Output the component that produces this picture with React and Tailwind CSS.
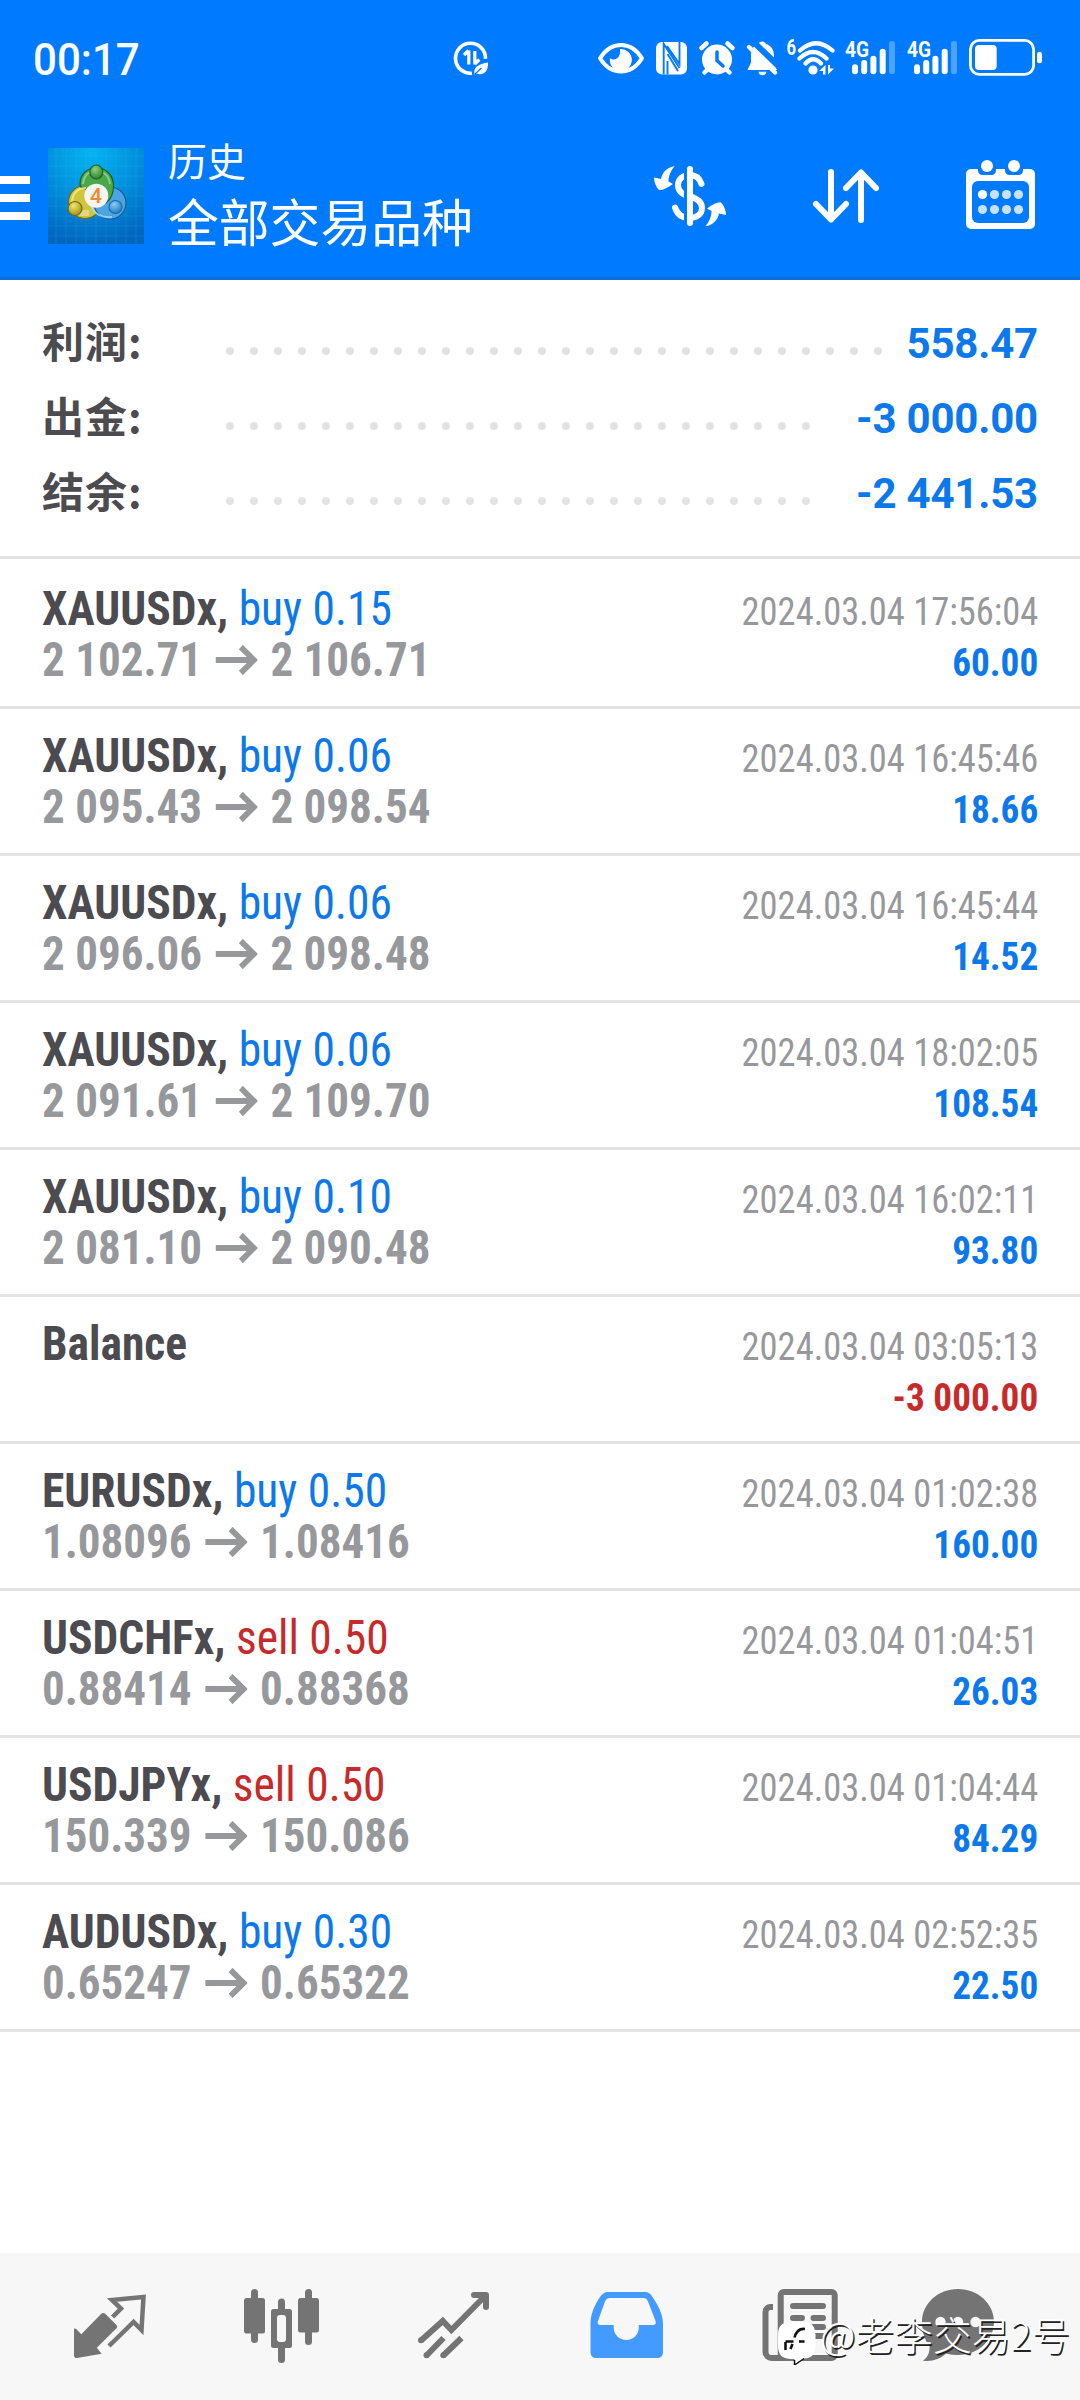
import clsx from 'clsx';

const summary = [
  ['利润:', '558.47', 28],
  ['出金:', '-3 000.00', 25],
  ['结余:', '-2 441.53', 25]
];

const deals = [
  { symbol: 'XAUUSDx', side: 'buy', lots: '0.15', open: '2 102.71', close: '2 106.71', time: '2024.03.04 17:56:04', profit: '60.00' },
  { symbol: 'XAUUSDx', side: 'buy', lots: '0.06', open: '2 095.43', close: '2 098.54', time: '2024.03.04 16:45:46', profit: '18.66' },
  { symbol: 'XAUUSDx', side: 'buy', lots: '0.06', open: '2 096.06', close: '2 098.48', time: '2024.03.04 16:45:44', profit: '14.52' },
  { symbol: 'XAUUSDx', side: 'buy', lots: '0.06', open: '2 091.61', close: '2 109.70', time: '2024.03.04 18:02:05', profit: '108.54' },
  { symbol: 'XAUUSDx', side: 'buy', lots: '0.10', open: '2 081.10', close: '2 090.48', time: '2024.03.04 16:02:11', profit: '93.80' },
  { symbol: 'Balance', time: '2024.03.04 03:05:13', profit: '-3 000.00' },
  { symbol: 'EURUSDx', side: 'buy', lots: '0.50', open: '1.08096', close: '1.08416', time: '2024.03.04 01:02:38', profit: '160.00' },
  { symbol: 'USDCHFx', side: 'sell', lots: '0.50', open: '0.88414', close: '0.88368', time: '2024.03.04 01:04:51', profit: '26.03' },
  { symbol: 'USDJPYx', side: 'sell', lots: '0.50', open: '150.339', close: '150.086', time: '2024.03.04 01:04:44', profit: '84.29' },
  { symbol: 'AUDUSDx', side: 'buy', lots: '0.30', open: '0.65247', close: '0.65322', time: '2024.03.04 02:52:35', profit: '22.50' }
];

const BLUE = '#007aff';

function Signal({ className }) {
  return (
    <svg width="52" height="45" viewBox="0 0 52 45" fill="#fff" className={className}>
      <text x="1" y="21.7" fontSize="21.5" fontWeight="700" textLength="24" lengthAdjust="spacingAndGlyphs" className="font-['Roboto']">4G</text>
      <rect x="8" y="29.3" width="6" height="10" rx="3" />
      <rect x="17.2" y="25" width="6" height="14.3" rx="3" />
      <rect x="26.4" y="20.7" width="6" height="18.6" rx="3" />
      <rect x="35.7" y="13.7" width="6" height="25.6" rx="3" />
      <rect x="45" y="6" width="6" height="33.3" rx="3" opacity="0.3" />
    </svg>
  );
}

function StatusBar() {
  return (
    <div className="flex h-20 items-start pt-[35px] text-white">
      <div className="ml-[33px] w-[417px]">
        <span className="inline-block origin-left scale-x-[.935] font-['Roboto'] text-[45px] leading-[50px] font-medium">00:17</span>
      </div>
      <svg width="42" height="45" viewBox="0 0 42 45" fill="none" stroke="#fff">
        <path d="M35.5 23.8A15 15 0 1 0 22 38.2" strokeWidth="3.6" />
        <path d="M18.8 15.5v14M14 20l4.5-4.5M24.8 16v13.5M24.8 29l4.5-4.5" strokeWidth="3.2" />
        <path d="M24.5 39.5C23 31 30 29 38 27.5C38.500 36 34 41 26.500 38.500" fill="#fff" stroke="none" />
        <path d="M25 39l6.500-6" stroke={BLUE} strokeWidth="1.2" />
      </svg>
      <svg width="50" height="45" viewBox="0 0 50 45" className="ml-[104px]">
        <path d="M4 23.300C15 5.500 35 5.500 46 23.300C35 41 15 41 4 23.300Z" fill="none" stroke="#fff" strokeWidth="4" strokeLinejoin="round" />
        <path d="M24 14A11 11 0 1 1 14 23C18 26.500 25 24 24 14Z" fill="#fff" />
      </svg>
      <svg width="36" height="45" viewBox="0 0 36 45" className="ml-2">
        <rect x="2" y="7" width="31" height="32.500" rx="6" fill="#fff" />
        <path d="M9.700 39.500V9L25.500 33M25.500 7V29L13 11M13.500 19L24 36M13.500 26V39.500" fill="none" stroke={BLUE} strokeWidth="1.900" />
      </svg>
      <svg width="40" height="45" viewBox="0 0 40 45" className="ml-[7px]" stroke="#fff" strokeWidth="4.500" strokeLinecap="round" fill="none">
        <circle cx="20" cy="24.500" r="15" fill="#fff" stroke="none" />
        <path d="M4.500 13l5-4.500M30.500 8.500l5 4.500M7.500 37.500l4-4M32.500 37.500l-4-4" />
        <path d="M20 17v8.500l6 5.500" stroke={BLUE} strokeWidth="3.500" />
      </svg>
      <svg width="36" height="45" viewBox="0 0 36 45" className="ml-[7px]" fill="none">
        <path d="M18.300 6.500C20 6.500 21.500 7.500 22 9C28 11 30 15.500 30 21V28L33 35H3.500L7 27.500V20C7 15 9 11 14 9C15 7.500 16.500 6.500 18.300 6.500Z" fill="#fff" />
        <path d="M14.500 36.800h8c-.5 2.500-2 3.500-4 3.500s-3.500-1-4-3.500z" fill="#fff" />
        <path d="M7 4.500L37 33.500" stroke={BLUE} strokeWidth="6" />
        <path d="M5 12L31 37.500" stroke="#fff" strokeWidth="4.300" strokeLinecap="round" />
      </svg>
      <svg width="52" height="45" viewBox="0 0 52 45" className="ml-[5px]" stroke="#fff" strokeLinecap="round" fill="none">
        <text x="1.500" y="20" fontSize="22" fontWeight="700" textLength="9.500" lengthAdjust="spacingAndGlyphs" fill="#fff" stroke="none" className="font-['Roboto']">6</text>
        <path d="M15 15.500Q31 1 47.500 15.500M14.500 23.500Q28 10.500 41.500 23.500M20.500 28.500Q28 20 36 28.500" strokeWidth="4.300" />
        <circle cx="28" cy="35" r="4.600" fill="#fff" stroke="none" />
        <path d="M40.500 30v9.500h-2.500v-3.500h-4zM43 39.500V30h2v3.500h4z" fill="#fff" stroke="none" />
      </svg>
      <Signal className="ml-[7px]" />
      <Signal className="ml-[10px]" />
      <svg width="77" height="45" viewBox="0 0 77 45" className="ml-[9px]">
        <rect x="3.400" y="5.400" width="63.200" height="34" rx="9" fill="none" stroke="#fff" strokeWidth="2.800" />
        <rect x="8" y="10" width="21.700" height="25" rx="4" fill="#fff" />
        <rect x="70" y="16.700" width="5" height="11.500" rx="2.500" fill="#fff" />
      </svg>
    </div>
  );
}

function AppLogo() {
  const grid = [8, 18, 28, 38, 48, 58, 68, 78, 88];
  return (
    <svg width="96" height="96" viewBox="0 0 96 96">
      <defs>
        <radialGradient id="sky" cx="0.45" cy="0.05" r="0.95">
          <stop offset="0" stopColor="#04b4f2" />
          <stop offset="0.5" stopColor="#0290dc" />
          <stop offset="1" stopColor="#0166c0" />
        </radialGradient>
        <radialGradient id="green" cx="0.4" cy="0.3" r="0.8">
          <stop offset="0" stopColor="#8fd07a" />
          <stop offset="1" stopColor="#1f7a2c" />
        </radialGradient>
        <radialGradient id="gold" cx="0.4" cy="0.3" r="0.8">
          <stop offset="0" stopColor="#f0e46a" />
          <stop offset="1" stopColor="#9a8712" />
        </radialGradient>
        <radialGradient id="blue" cx="0.4" cy="0.3" r="0.8">
          <stop offset="0" stopColor="#86ccf5" />
          <stop offset="1" stopColor="#1672b8" />
        </radialGradient>
      </defs>
      <rect width="96" height="96" fill="url(#sky)" />
      {grid.map((n) => (
        <path key={n} d={`M${n} 0V96M0 ${n}H96`} stroke="#5cc8ff" strokeOpacity="0.18" strokeWidth="0.8" />
      ))}
      <g strokeWidth="1.2">
        <circle cx="37" cy="54" r="16.500" fill="#cfc63c" stroke="#756a12" />
        <circle cx="62" cy="55" r="16" fill="#4ba5e2" stroke="#145a94" />
        <path d="M32 36C32 26 39 20 48.500 20C59 20 65.500 28 65.500 38C65.500 46 62 52 58 55L48 48L36 40C33 40 32 38 32 36Z" fill="#4aa84a" stroke="#1d6128" />
        <path d="M35 36C36 27 41 23 48 23C56 23 61 28 62 36" fill="none" stroke="#a9dca0" strokeWidth="2" opacity="0.7" />
        <path d="M24 55C24 45 30 40 38 40" fill="none" stroke="#f3ef9e" strokeWidth="2" opacity="0.8" />
        <path d="M43 58C46 66 54 70 64 69" fill="none" stroke="#a9d9fa" strokeWidth="2" opacity="0.8" />
        <path d="M27 62h14v6h-9z" fill="#e9e6b8" stroke="none" opacity="0.6" />
        <ellipse cx="48.300" cy="24" rx="6.500" ry="7" fill="url(#green)" stroke="#1d6128" />
        <circle cx="27" cy="60.500" r="7" fill="url(#gold)" stroke="#756a12" />
        <circle cx="67.500" cy="59" r="6.500" fill="url(#blue)" stroke="#1d6aa5" />
      </g>
      <circle cx="48.300" cy="47.700" r="12" fill="#f4f4f4" />
      <text x="48" y="55" textAnchor="middle" fontSize="21" fontWeight="500" fill="#f08a24" className="font-['Roboto']">4</text>
    </svg>
  );
}

function CurrencyIcon() {
  const swoosh = 'M24.700 6.300C17 7 12 13 11 19L4 17.500C4 22 6 27 9 30Q14 30.500 23 24L18.500 21.500C18.500 16 21 10 24.700 6.300Z';
  return (
    <svg width="80" height="72" viewBox="0 0 80 72" fill="#fff">
      <path d="M51.500 24C49.500 18 46 15 40 15C33 15 28 19 28 25C28 32 33 34.500 40 36.500C47 38.500 52 42 52 48C52 54.500 46 58 40 58C32 58 27 54 25 47.500" fill="none" stroke="#fff" strokeWidth="6" strokeLinecap="round" />
      <rect x="34" y="5" width="6" height="62" fill={BLUE} />
      <rect x="37" y="6" width="6" height="60" rx="3" />
      <path d={swoosh} />
      <path d={swoosh} transform="rotate(180 40 36.200)" />
    </svg>
  );
}

function SortIcon() {
  return (
    <svg width="76" height="64" viewBox="0 0 76 64" fill="none" stroke="#fff" strokeWidth="6" strokeLinecap="round" strokeLinejoin="round">
      <path d="M23 8v47M8 40l15 15.500L38 40" />
      <path d="M53 56V9M38 24L53 8.500L68 24" />
    </svg>
  );
}

function CalendarIcon() {
  return (
    <svg width="80" height="78" viewBox="0 0 80 78" fill="#fff">
      <rect x="6" y="14" width="69" height="60" rx="5" />
      <rect x="12" y="26" width="57" height="42" rx="6" fill={BLUE} />
      <path d="M18 11h18v4.500a4.500 4.500 0 0 1-4.500 4.500h-9a4.500 4.500 0 0 1-4.500-4.500zM45 11h18v4.500a4.500 4.500 0 0 1-4.500 4.500h-9a4.500 4.500 0 0 1-4.500-4.500z" fill={BLUE} />
      <circle cx="27" cy="11" r="6" />
      <circle cx="54" cy="11" r="6" />
      <circle cx="22.500" cy="39.500" r="4.600" />
      <g opacity="0.78">
        <circle cx="34.500" cy="39.500" r="4.600" />
        <circle cx="46.500" cy="39.500" r="4.600" />
        <circle cx="58.500" cy="39.500" r="4.600" />
        <circle cx="22.500" cy="54.500" r="4.600" />
        <circle cx="34.500" cy="54.500" r="4.600" />
        <circle cx="46.500" cy="54.500" r="4.600" />
        <circle cx="58.500" cy="54.500" r="4.600" />
      </g>
    </svg>
  );
}

function TitleBar() {
  return (
    <div className="flex h-[200px] items-start border-b-[3px] border-[#0a6edb] text-white">
      <div className="mt-24 w-[30px] space-y-2.5">
        <div className="h-2 bg-white" />
        <div className="h-2 bg-white" />
        <div className="h-2 bg-white" />
      </div>
      <div className="mt-[68px] ml-[18px]">
        <AppLogo />
      </div>
      <div className="mt-[57px] ml-6 w-[482px] font-['Noto_Sans_CJK_SC',sans-serif]">
        <div className="text-[39px] leading-[44px]">历史</div>
        <div className="mt-[9px] text-[50.800px] leading-[60px]">全部交易品种</div>
      </div>
      <div className="mt-20">
        <CurrencyIcon />
      </div>
      <div className="mt-[84px] ml-[78px]">
        <SortIcon />
      </div>
      <div className="mt-[75px] ml-[76px]">
        <CalendarIcon />
      </div>
    </div>
  );
}

function SummaryRow({ label, value, dots }) {
  return (
    <div className="flex h-[75px] items-center">
      <span className="mb-2 w-[184px] font-['Noto_Sans_CJK_SC',sans-serif] text-[42px] leading-none font-bold tracking-[1px] text-[#4c4b50]">{label}</span>
      <div className="mt-[15px] flex gap-4">
        {Array.from({ length: dots }, (_, i) => (
          <span key={i} className="size-2 rounded-full bg-[#e3e3e3]" />
        ))}
      </div>
      <span className="ml-auto font-['Roboto'] text-[42px] leading-none font-bold tracking-[-0.2px] text-[#0b78ec]">{value}</span>
    </div>
  );
}

function DealRow({ deal }) {
  const sell = deal.side === 'sell';
  return (
    <div className="flex h-[147px] justify-between border-b-[3px] border-[#e3e3e3] px-[42px] font-['Roboto_Condensed','Roboto'] font-stretch-75% whitespace-pre">
      <div className="pt-[21px] text-[48px] leading-[51px]">
        <div className="flex origin-left scale-x-[.948]">
          <span className="font-bold text-[#4c4b50]">{deal.side ? `${deal.symbol}, ` : deal.symbol}</span>
          {deal.side && <span className={sell ? 'text-[#c72a2a]' : 'text-[#0b78ec]'}>{`${deal.side} ${deal.lots}`}</span>}
        </div>
        {deal.open && (
          <div className="flex origin-left scale-x-[.938] items-center font-bold text-[#97989c]">
            <span>{deal.open}</span>
            <svg width="45" height="30" viewBox="0 0 45 30" fill="none" stroke="#97989c" strokeWidth="6" className="mx-[14px]">
              <path d="M0 15h40M27 2l14 13l-14 13" />
            </svg>
            <span>{deal.close}</span>
          </div>
        )}
      </div>
      <div className="pt-[25px] text-right text-[39px] leading-[51px]">
        <div className="origin-right scale-x-[.935] text-[#97989c]">{deal.time}</div>
        <div className={clsx('origin-right scale-x-[.955] font-bold', deal.profit.startsWith('-') ? 'text-[#c72a2a]' : 'text-[#0b78ec]')}>{deal.profit}</div>
      </div>
    </div>
  );
}

function QuotesIcon() {
  return (
    <>
      <path d="M6 42.700L11.300 48.300L31 28a3 3 0 0 1 4.500 0L46 38.500a3 3 0 0 1 0 4.300L26.800 61.700L31.600 67.700L7 72a2.500 2.500 0 0 1-3-2.500V42.500z" />
      <path d="M42.600 31L51 22.500L42 14L73.500 11L71.500 44L63.600 36L39 60" fill="none" stroke="currentColor" strokeWidth="4.500" />
    </>
  );
}

function ChartIcon() {
  return (
    <>
      <rect x="2" y="12" width="21" height="35.500" rx="2.500" />
      <rect x="9" y="3" width="7" height="54" rx="3.500" />
      <rect x="56" y="12" width="21" height="34.500" rx="2.500" />
      <rect x="63" y="3" width="7" height="56" rx="3.500" />
      <rect x="36" y="12.500" width="7" height="64.500" rx="3.500" />
      <rect x="29" y="23" width="21" height="39" rx="2.500" />
      <rect x="35" y="29" width="9" height="27" rx="3" fill="#f7f7f7" />
    </>
  );
}

function TradeIcon() {
  return (
    <g fill="none" stroke="currentColor" strokeWidth="6" strokeLinejoin="miter">
      <path d="M7 54.500L28.800 35L37.400 44L71 10" />
      <path d="M60 9H72V21" strokeLinecap="round" strokeLinejoin="round" />
      <path d="M12.500 69.500L29.500 52M29.300 69.500L47.500 52" />
      <g fill="currentColor" stroke="none">
        <circle cx="7" cy="54.300" r="3" />
        <circle cx="12.500" cy="69.300" r="3" />
        <circle cx="29.300" cy="69.300" r="3" />
      </g>
    </g>
  );
}

function HistoryIcon() {
  return (
    <path
      fillRule="evenodd"
      d="M22 6H59C62.500 6 64.500 7.500 66.500 11C72 19 77 28 77 38V66.500a5.500 5.500 0 0 1-5.500 5.500H10a5.500 5.500 0 0 1-5.500-5.500V38C4.500 28 8.500 19 14 11C16.500 7.500 18.500 6 22 6ZM24 12C21.500 12 20 13 19 15.500L12 35C11 37.500 12 39 14.500 39H27.700V41.500C27.700 48.500 33.500 54 40.300 54S52.800 48.500 52.800 41.500V39H67C69.500 39 70.300 37.500 69.500 35L62 15.500C61 13 59.500 12 57 12Z"
    />
  );
}

function NewsIcon() {
  return (
    <g fill="none" stroke="currentColor" strokeWidth="6">
      <rect x="22.700" y="6" width="54" height="66" rx="3" />
      <path d="M15 21H12.500a5 5 0 0 0-5 5V66a6 6 0 0 0 6 6H25" />
      <path d="M35 20H65M35 32H44M55.500 32H65M35 41H44M55.500 41H65M35 50H65" strokeLinecap="round" />
    </g>
  );
}

function ChatIcon() {
  return (
    <>
      <path d="M28 3C48 3 64 17.500 64 36S48 69 28 69C24 69 20 68.500 16 67.500C10 73 2 76 -7 74.700C-2 71 0 66 -0.500 60C-5 55 -8 46 -8 36C-8 17.500 8 3 28 3Z" />
      <g fill="#f7f7f7">
        <circle cx="10.500" cy="36" r="5.200" />
        <circle cx="28" cy="36" r="5.200" />
        <circle cx="45.500" cy="36" r="5.200" />
      </g>
    </>
  );
}

const tabs = [
  ['quotes', QuotesIcon],
  ['chart', ChartIcon],
  ['trade', TradeIcon],
  ['history', HistoryIcon],
  ['news', NewsIcon],
  ['chat', ChatIcon]
];

function Watermark() {
  return (
    <div className="absolute top-[60px] left-[776px] flex items-start text-white">
      <svg width="44" height="52" viewBox="0 -2 44 52">
        <path d="M14 7H27C36 7 39.500 12 39.500 20V30C39.500 39 36 43 28 43.500L18.500 50V44H14C5.500 43.500 2 39 2 30V20C2 12 5.500 7 14 7Z" fill="#fff" />
        <path d="M28 43.500L18.500 50V45" fill="none" stroke="#111" strokeWidth="1.500" />
        <path d="M29 14C22.500 13 20 17 18.500 22.500M9.500 26.500H17.500M23 26.500h5.500M9.500 27v8M16.500 29l-2 5" fill="none" stroke="#111" strokeWidth="2.600" />
      </svg>
      <span className="font-['Noto_Sans_CJK_SC',sans-serif] text-[38.800px] leading-10 font-light whitespace-nowrap [text-shadow:1.500px_1.500px_0_#222]">@老李交易2号</span>
    </div>
  );
}

export default function App() {
  return (
    <div className="flex h-[2400px] w-[1080px] flex-col overflow-hidden bg-white">
      <header className="bg-[#007aff]">
        <StatusBar />
        <TitleBar />
      </header>
      <section className="h-[279px] border-b-[3px] border-[#e3e3e3] px-[42px] pt-[26px]">
        {summary.map(([label, value, dots]) => (
          <SummaryRow key={label} label={label} value={value} dots={dots} />
        ))}
      </section>
      <main className="flex-1 pt-[3px]">
        {deals.map((deal) => (
          <DealRow key={deal.time} deal={deal} />
        ))}
      </main>
      <nav className="relative flex h-[147px] bg-[#f7f7f7] pt-[33px] pl-6">
        {tabs.map(([name, Icon]) => (
          <div key={name} className={clsx('flex w-[172px] shrink-0 justify-center', name === 'history' ? 'text-[#449bff]' : 'text-[#747474]')}>
            <svg width="80" height="80" viewBox="0 0 80 80" fill="currentColor" overflow="visible">
              <Icon />
            </svg>
          </div>
        ))}
        <Watermark />
      </nav>
    </div>
  );
}
